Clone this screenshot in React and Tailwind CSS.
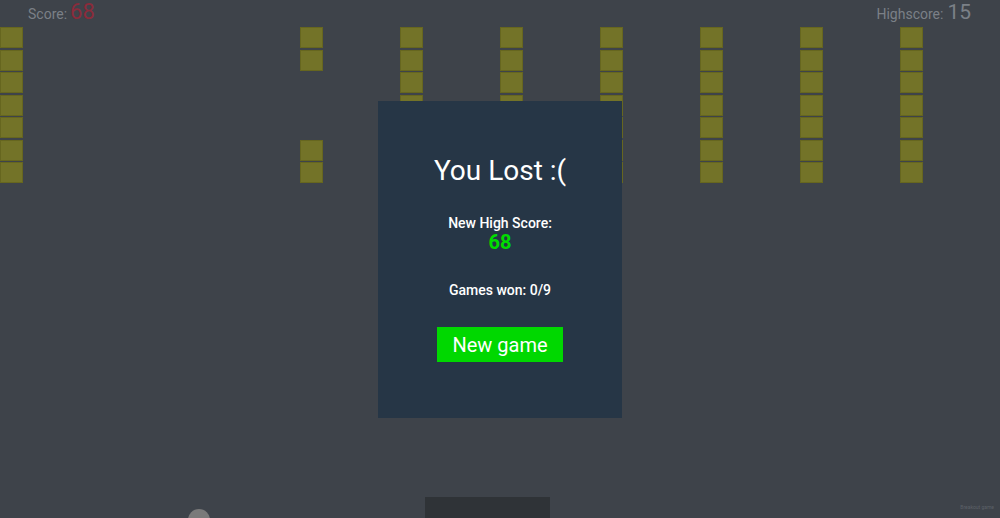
import React from "react";

const columns = [
  [1, 1, 1, 1, 1, 1, 1],
  null,
  null,
  [1, 1, 0, 0, 0, 1, 1],
  [1, 1, 1, 1, 1, 1, 1],
  [1, 1, 1, 1, 1, 1, 1],
  [1, 1, 1, 1, 1, 1, 1],
  [1, 1, 1, 1, 1, 1, 1],
  [1, 1, 1, 1, 1, 1, 1],
  [1, 1, 1, 1, 1, 1, 1],
];

const Brick = ({ on }) => (
  <div
    className={`h-[21px] w-[23px] ${
      on ? "bg-[#737328] border border-[#66661f]" : ""
    }`}
  />
);

const App = () => {
  return (
    <div
      className="relative h-[518px] w-[1000px] overflow-hidden bg-[#3e434a]"
      style={{ fontFamily: "Roboto, 'Noto Sans', sans-serif" }}
    >
      {/* Score bar */}
      <div className="flex h-[27px] items-start justify-between pl-[28px] pr-[29px] pt-[1px]">
        <div className="flex items-baseline gap-[3px]">
          <span className="text-[14px] leading-[22px] text-[#7b8087]">Score:</span>
          <span className="text-[22px] leading-[22px] text-[#8b2b3b]">68</span>
        </div>
        <div className="flex items-baseline gap-[4px]">
          <span className="text-[14px] leading-[22px] text-[#7b8087]">Highscore:</span>
          <span className="text-[21px] leading-[22px] text-[#7b8087]">15</span>
        </div>
      </div>

      {/* Bricks */}
      <div className="flex">
        {columns.map((col, i) => (
          <div key={i} className="flex w-[100px] flex-col gap-[1.5px]">
            {col && col.map((on, j) => <Brick key={j} on={on} />)}
          </div>
        ))}
      </div>

      {/* Paddle */}
      <div className="absolute left-[425px] top-[497px] h-[24px] w-[125px] bg-[#2f3337]" />
      {/* Ball */}
      <div className="absolute left-[188px] top-[509px] h-[22px] w-[22px] rounded-full bg-[#7a7a7a]" />

      <div className="absolute right-[6px] top-[504px] text-[5px] text-[#5c6168]">
        Breakout game
      </div>

      {/* Game over modal */}
      <div className="absolute left-[378px] top-[101px] flex h-[317px] w-[244px] flex-col items-center bg-[#263646] pt-[53px] text-white">
        <h1 className="text-[28px] font-normal leading-[34px]">You Lost :(</h1>
        <p className="mt-[26px] text-[14px] font-medium leading-[18px]">New High Score:</p>
        <p className="text-[20px] font-bold leading-[20px] text-[#00dd00]">68</p>
        <p className="mt-[28px] text-[14px] font-medium leading-[20px]">Games won: 0/9</p>
        <button className="mt-[27px] h-[35px] w-[126px] bg-[#00d800] text-[20px] leading-none text-white">
          New game
        </button>
      </div>
    </div>
  );
};

export default App;
